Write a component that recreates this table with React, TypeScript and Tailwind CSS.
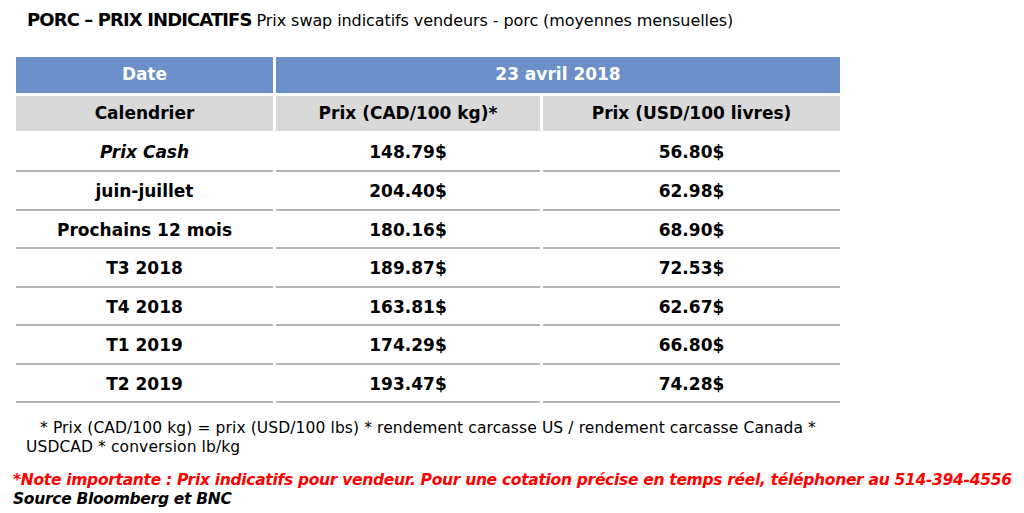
const ROWS = [
  { label: "Prix Cash", cad: "148.79$", usd: "56.80$", italic: true },
  { label: "juin-juillet", cad: "204.40$", usd: "62.98$" },
  { label: "Prochains 12 mois", cad: "180.16$", usd: "68.90$" },
  { label: "T3 2018", cad: "189.87$", usd: "72.53$" },
  { label: "T4 2018", cad: "163.81$", usd: "62.67$" },
  { label: "T1 2019", cad: "174.29$", usd: "66.80$" },
  { label: "T2 2019", cad: "193.47$", usd: "74.28$" },
];

const cell = "flex items-center justify-center border-b-2 border-[#b5b5b5]";

export default function App() {
  return (
    <main className="h-[513px] w-[1024px] bg-white font-['DejaVu_Sans',sans-serif] text-black">
      <h1 className="flex items-baseline pl-[27px] pt-[10px] leading-[20px]">
        <span className="text-[18px] font-bold tracking-[-0.9px]">PORC – PRIX INDICATIFS</span>
        <span className="ml-[5px] text-[16px] tracking-[-0.08px]">
          Prix swap indicatifs vendeurs - porc (moyennes mensuelles)
        </span>
      </h1>

      <section className="ml-[16px] mt-[26px] grid w-[824px] grid-cols-[257px_264px_297px] gap-x-[3px] gap-y-[3px] text-[17px] font-bold">
        <div className="flex h-[36px] items-center justify-center bg-[#6a8fc9] text-white">Date</div>
        <div className="col-span-2 flex h-[36px] items-center justify-center bg-[#6a8fc9] text-white">
          23 avril 2018
        </div>

        <div className="flex h-[35px] items-center justify-center bg-[#d9d9d9]">Calendrier</div>
        <div className="flex h-[35px] items-center justify-center bg-[#d9d9d9]">Prix (CAD/100 kg)*</div>
        <div className="flex h-[35px] items-center justify-center bg-[#d9d9d9]">Prix (USD/100 livres)</div>

        {ROWS.map((r, i) => {
          const h = i === 0 ? "h-[38px] pt-[2px]" : "h-[35.5px]";
          return (
            <div key={r.label} className="contents">
              <div className={`${cell} ${h} ${r.italic ? "italic" : ""}`}>{r.label}</div>
              <div className={`${cell} ${h}`}>{r.cad}</div>
              <div className={`${cell} ${h}`}>{r.usd}</div>
            </div>
          );
        })}
      </section>

      <p className="mt-[16px] pl-[26px] text-[15.5px] leading-[19px] tracking-[0.1px]">
        <span className="pl-[14px]">
          * Prix (CAD/100 kg) = prix (USD/100 lbs) * rendement carcasse US / rendement carcasse Canada *
        </span>
        <br />
        USDCAD * conversion lb/kg
      </p>

      <div className="mt-[14px] pl-[13px] text-[15.5px] font-bold italic leading-[19px] tracking-[-0.3px]">
        <p className="text-[#ff0000]">
          *Note importante : Prix indicatifs pour vendeur. Pour une cotation précise en temps réel, téléphoner au
          514-394-4556
        </p>
        <p>Source Bloomberg et BNC</p>
      </div>
    </main>
  );
}
